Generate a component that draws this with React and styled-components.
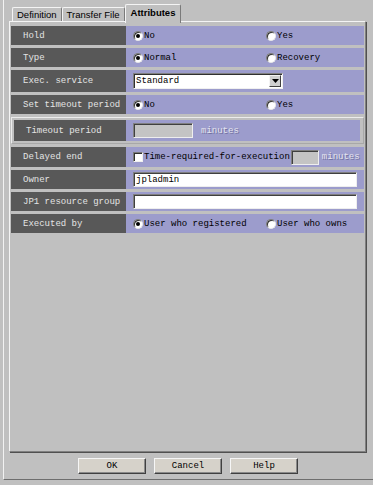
import React from 'react'
import styled, { createGlobalStyle } from 'styled-components'

const GlobalStyle = createGlobalStyle`
    html, body {
        margin: 0;
        padding: 0;
        background: #c0c0c0;
    }
    body {
        width: 373px;
        height: 485px;
        overflow: hidden;
        font-family: "Liberation Mono", "DejaVu Sans Mono", monospace;
    }
`

const App = () => {
    return (
        <>
            <GlobalStyle />
            <Frame>
                <TabBar>
                    <Tab>Definition</Tab>
                    <Tab>Transfer File</Tab>
                    <Tab active>Attributes</Tab>
                </TabBar>
                <Panel>
                    <Rows>
                        <Row h={19}>
                            <Label>Hold</Label>
                            <Value>
                                <Option><Radio checked />No</Option>
                                <Option><Radio />Yes</Option>
                            </Value>
                        </Row>
                        <Row h={19}>
                            <Label>Type</Label>
                            <Value>
                                <Option><Radio checked />Normal</Option>
                                <Option><Radio />Recovery</Option>
                            </Value>
                        </Row>
                        <Row h={22}>
                            <Label>Exec. service</Label>
                            <Value>
                                <Select>
                                    <span>Standard</span>
                                    <DropButton>
                                        <svg width="7" height="4" viewBox="0 0 7 4">
                                            <path d="M0 0h7L3.5 4z" fill="#000" />
                                        </svg>
                                    </DropButton>
                                </Select>
                            </Value>
                        </Row>
                        <Row h={19}>
                            <Label>Set timeout period</Label>
                            <Value>
                                <Option><Radio checked />No</Option>
                                <Option><Radio />Yes</Option>
                            </Value>
                        </Row>
                        <Group>
                            <Label>Timeout period</Label>
                            <Value>
                                <Field w={60} disabled />
                                <Unit gap={8}>minutes</Unit>
                            </Value>
                        </Group>
                        <Row h={20}>
                            <Label>Delayed end</Label>
                            <Value>
                                <Checkbox />
                                <OptionText>Time-required-for-execution</OptionText>
                                <Field w={28} gap={1} disabled />
                                <Unit gap={3}>minutes</Unit>
                            </Value>
                        </Row>
                        <Row h={19}>
                            <Label>Owner</Label>
                            <Value>
                                <Field w={224}>jpladmin</Field>
                            </Value>
                        </Row>
                        <Row h={19}>
                            <Label>JP1 resource group</Label>
                            <Value>
                                <Field w={224} />
                            </Value>
                        </Row>
                        <Row h={19}>
                            <Label>Executed by</Label>
                            <Value>
                                <Option><Radio checked />User who registered</Option>
                                <Option><Radio />User who owns</Option>
                            </Value>
                        </Row>
                    </Rows>
                </Panel>
                <ButtonBar>
                    <Button>OK</Button>
                    <Button>Cancel</Button>
                    <Button>Help</Button>
                </ButtonBar>
            </Frame>
        </>
    )
}

const Frame = styled.div`
    margin-left: 3px;
    height: 480px;
    box-sizing: border-box;
    border-left: 1px solid #f2f2f2;
    border-bottom: 1px solid #6e6e6e;
    padding: 4px 0 0 5px;
    background: #c0c0c0;
`

const TabBar = styled.div`
    display: flex;
    align-items: flex-end;
    height: 17px;
    padding-left: 3px;
    position: relative;
    z-index: 1;
`

const Tab = styled.div`
    box-sizing: border-box;
    height: ${p => (p.active ? 19 : 14)}px;
    margin-bottom: ${p => (p.active ? -2 : 0)}px;
    padding: ${p => (p.active ? '2px 5px 0 5px' : '1px 4px 0 4px')};
    background: #c0c0c0;
    border-top: 1px solid #f4f4f4;
    border-left: 1px solid #f4f4f4;
    border-right: 1px solid #7a7a7a;
    border-radius: 2px 2px 0 0;
    font-family: "Liberation Sans", Arial, sans-serif;
    font-size: 9.5px;
    font-weight: ${p => (p.active ? 'bold' : 'normal')};
    color: #000;
    white-space: nowrap;
`

const Panel = styled.div`
    box-sizing: border-box;
    width: 357px;
    height: 431px;
    border-top: 1px solid #f4f4f4;
    border-left: 1px solid #f4f4f4;
    border-right: 1px solid #808080;
    border-bottom: 1px solid #808080;
    box-shadow: 1px 1px 0 #505050;
    padding: 4px 1px 0 1px;
`

const Rows = styled.div`
    display: flex;
    flex-direction: column;
    gap: 3px;
`

const Row = styled.div`
    display: flex;
    height: ${p => p.h}px;
`

const Group = styled.div`
    display: flex;
    box-sizing: border-box;
    height: 27px;
    padding: 2px 3px 2px 2px;
    border: 1px solid #ececec;
    border-right-color: #a8a8a8;
    border-bottom-color: #a8a8a8;
`

const Label = styled.div`
    display: flex;
    align-items: center;
    box-sizing: border-box;
    width: 115px;
    flex: none;
    padding-left: 12px;
    background: #585858;
    color: #e4e4e4;
    font-size: 9px;
    white-space: nowrap;

    ${Group} & {
        width: 112px;
    }
`

const Value = styled.div`
    flex: 1;
    display: flex;
    align-items: center;
    padding-left: 7px;
    background: #9c9ccc;
    font-size: 9px;
    color: #000;
    white-space: nowrap;
`

const Option = styled.label`
    display: flex;
    align-items: center;
    gap: 1px;

    &:first-child {
        width: 133px;
    }
`

const OptionText = styled.span`
    margin-left: 1px;
`

const Radio = styled.span`
    position: relative;
    box-sizing: border-box;
    width: 10px;
    height: 10px;
    border-radius: 50%;
    background: #fff;
    border: 1px solid #7a7a7a;
    border-right-color: #e8e8e8;
    border-bottom-color: #e8e8e8;
    box-shadow: inset 1px 1px 0 #303030;

    &::after {
        content: '';
        display: ${p => (p.checked ? 'block' : 'none')};
        position: absolute;
        left: 2px;
        top: 2px;
        width: 4px;
        height: 4px;
        border-radius: 50%;
        background: #000;
    }
`

const Checkbox = styled.span`
    box-sizing: border-box;
    width: 10px;
    height: 10px;
    background: #fff;
    border: 1px solid #7a7a7a;
    border-right-color: #f0f0f0;
    border-bottom-color: #f0f0f0;
    box-shadow: inset 1px 1px 0 #303030;
`

const Select = styled.div`
    box-sizing: border-box;
    width: 150px;
    height: 16px;
    display: flex;
    align-items: center;
    justify-content: space-between;
    padding: 0 1px 0 2px;
    background: #fff;
    border: 1px solid #808080;
    border-right-color: #f0f0f0;
    border-bottom-color: #f0f0f0;
    box-shadow: inset 1px 1px 0 #303030;
`

const DropButton = styled.span`
    box-sizing: border-box;
    width: 12px;
    height: 12px;
    display: flex;
    align-items: center;
    justify-content: center;
    background: #d0d0d0;
    border: 1px solid #f4f4f4;
    border-right-color: #404040;
    border-bottom-color: #404040;
`

const Field = styled.div`
    box-sizing: border-box;
    width: ${p => p.w}px;
    height: 15px;
    display: flex;
    align-items: center;
    padding-left: 2px;
    margin-left: ${p => p.gap || 0}px;
    background: ${p => (p.disabled ? '#c4c4c4' : '#fff')};
    border: 1px solid #808080;
    border-right-color: #eeeeee;
    border-bottom-color: #eeeeee;
    box-shadow: inset 1px 1px 0 #404040;
`

const Unit = styled.span`
    margin-left: ${p => p.gap}px;
    color: #e4e4ee;
    text-shadow: 1px 1px 0 #7070a0;
`

const ButtonBar = styled.div`
    display: flex;
    justify-content: center;
    gap: 8px;
    margin-top: 6px;
    padding-right: 6px;
`

const Button = styled.button`
    box-sizing: border-box;
    width: 68px;
    height: 16px;
    padding: 0;
    background: #d6d2ca;
    border: 1px solid #f6f6f6;
    border-right-color: #404040;
    border-bottom-color: #404040;
    box-shadow: inset -1px -1px 0 #8a8a8a;
    font-family: "Liberation Mono", "DejaVu Sans Mono", monospace;
    font-size: 9px;
    color: #000;
`

export default App
